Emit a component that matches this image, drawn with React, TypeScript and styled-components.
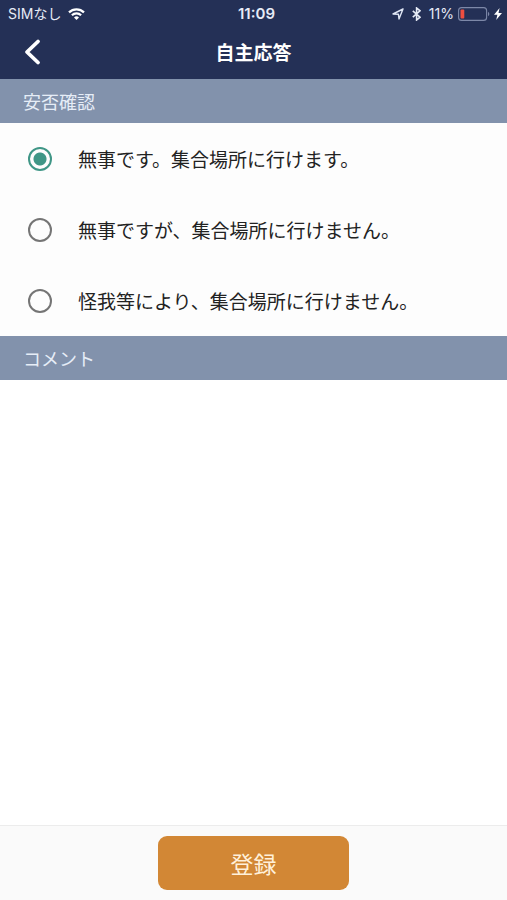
import React, { useState } from "react";
import styled, { createGlobalStyle } from "styled-components";

const GlobalStyle = createGlobalStyle`
  *, *::before, *::after { box-sizing: border-box; }
  body {
    margin: 0;
    background: #ffffff;
    color: #222222;
    font-family: "Noto Sans CJK JP", sans-serif;
  }
`;

const Screen = styled.form`
  display: flex;
  flex-direction: column;
  min-height: 100vh;
`;

const TopArea = styled.header`
  background: #243056;
  color: #ffffff;
`;

const StatusBar = styled.div`
  display: grid;
  grid-template-columns: 1fr auto 1fr;
  align-items: center;
  height: 28px;
  padding: 0 5px 0 8px;
  font-family: Inter, "Noto Sans CJK JP", sans-serif;
  font-size: 14px;
  line-height: 28px;
  color: #e6ebf6;
`;

const StatusGroup = styled.div<{ $end?: boolean }>`
  display: flex;
  align-items: center;
  justify-content: ${(p) => (p.$end ? "flex-end" : "flex-start")};
  gap: ${(p) => (p.$end ? 8 : 7)}px;
`;

const Clock = styled.span`
  padding-left: 3px;
  font-size: 15px;
  font-weight: 600;
`;

const Power = styled.span`
  display: flex;
  align-items: center;
  gap: 4px;
`;

const NavBar = styled.div`
  display: grid;
  grid-template-columns: 48px 1fr 48px;
  align-items: center;
  height: 51px;
  padding: 0 8px 3px;
`;

const BackButton = styled.button`
  display: flex;
  align-items: center;
  justify-content: center;
  height: 48px;
  padding: 0;
  border: 0;
  background: none;
  color: inherit;
  cursor: pointer;
`;

const Title = styled.h1`
  margin: 0;
  text-align: center;
  font-size: 19px;
  line-height: 28px;
  font-weight: 700;
`;

const SectionTitle = styled.h2`
  margin: 0;
  padding: 0 23px;
  background: #8292ac;
  color: #e6edf7;
  font-size: 18px;
  line-height: 44px;
  font-weight: 400;
`;

const Options = styled.div`
  background: #fdfdfd;
`;

const Option = styled.label`
  display: flex;
  align-items: center;
  gap: 26px;
  min-height: 71px;
  padding: 0 28px;
  font-size: 19px;
  line-height: 28px;
  cursor: pointer;
`;

const Radio = styled.input`
  appearance: none;
  flex: none;
  width: 24px;
  height: 24px;
  margin: 0;
  border: 2px solid #757575;
  border-radius: 50%;

  &:checked {
    border-color: #3f9686;
    background: radial-gradient(circle, #3f9686 6px, transparent 7px);
  }
`;

const Comment = styled.textarea`
  flex: 1;
  width: 100%;
  min-height: 120px;
  padding: 16px 23px;
  border: 0;
  outline: none;
  resize: none;
  background: #ffffff;
  color: inherit;
  font: inherit;
  font-size: 18px;
`;

const Footer = styled.footer`
  display: flex;
  justify-content: center;
  padding: 10px 16px;
  border-top: 1px solid #ececec;
  background: #fafafa;
`;

const SubmitButton = styled.button`
  width: 191px;
  height: 54px;
  padding: 0;
  border: 0;
  border-radius: 9px;
  background: #d28735;
  color: #fff0da;
  font: inherit;
  font-size: 23px;
  line-height: 54px;
  cursor: pointer;
`;

const WifiIcon = () => (
  <svg width="17" height="12" viewBox="0 0 17 12" fill="none" stroke="#fff" strokeWidth="2.2" aria-label="Wi-Fi">
    <path d="M1 4.4a10.6 10.6 0 0 1 15 0" />
    <path d="M3.9 7.3a6.5 6.5 0 0 1 9.2 0" />
    <path d="M8.5 12 6 9.5a3.5 3.5 0 0 1 5 0z" fill="#fff" stroke="none" />
  </svg>
);

const LocationIcon = () => (
  <svg width="12" height="12" viewBox="0 0 12 12" fill="none" stroke="#dfe6f4" strokeWidth="1.4" strokeLinejoin="round" aria-label="位置情報">
    <path d="M11 1 1 6l5.4.2.6 4.8z" />
  </svg>
);

const BluetoothIcon = () => (
  <svg width="9" height="14" viewBox="0 0 9 14" fill="none" stroke="#e6ebf6" strokeWidth="1.6" aria-label="Bluetooth">
    <path d="M.8 3.8 8 10.2 4.6 13V1L8 3.8.8 10.2" />
  </svg>
);

const BatteryIcon = () => (
  <svg width="32" height="14" viewBox="0 0 32 14" aria-label="バッテリー">
    <rect x="0.6" y="0.6" width="28" height="12.8" rx="3" fill="none" stroke="#7d88a8" strokeWidth="1.1" />
    <rect x="2.5" y="2.5" width="3.8" height="9" rx="1" fill="#ee4e40" />
    <path d="M30 4.8c1.8.7 1.8 3.7 0 4.4z" fill="#7d88a8" />
  </svg>
);

const BoltIcon = () => (
  <svg width="8" height="12" viewBox="0 0 8 12" fill="#fff" aria-label="充電中">
    <path d="M5.6 0 0 6.8h3.4L2.2 12 8 4.9H4.5z" />
  </svg>
);

const BackIcon = () => (
  <svg width="18" height="28" viewBox="0 0 18 28" fill="none" stroke="currentColor" strokeWidth="3.8" strokeLinecap="round" strokeLinejoin="round">
    <path d="M15 3.5 4 14l11 10.5" />
  </svg>
);

const choices = [
  "無事です。集合場所に行けます。",
  "無事ですが、集合場所に行けません。",
  "怪我等により、集合場所に行けません。",
];

export default function App() {
  const [selected, setSelected] = useState(0);
  const [comment, setComment] = useState("");

  return (
    <Screen lang="ja" onSubmit={(e) => e.preventDefault()}>
      <GlobalStyle />
      <TopArea>
        <StatusBar>
          <StatusGroup>
            <span>SIMなし</span>
            <WifiIcon />
          </StatusGroup>
          <Clock>11:09</Clock>
          <StatusGroup $end>
            <LocationIcon />
            <BluetoothIcon />
            <Power>
              <span>11%</span>
              <BatteryIcon />
              <BoltIcon />
            </Power>
          </StatusGroup>
        </StatusBar>
        <NavBar>
          <BackButton type="button" aria-label="戻る">
            <BackIcon />
          </BackButton>
          <Title>自主応答</Title>
        </NavBar>
      </TopArea>

      <SectionTitle id="safety">安否確認</SectionTitle>
      <Options role="radiogroup" aria-labelledby="safety">
        {choices.map((text, i) => (
          <Option key={text}>
            <Radio type="radio" name="safety" checked={selected === i} onChange={() => setSelected(i)} />
            <span>{text}</span>
          </Option>
        ))}
      </Options>

      <SectionTitle id="comment">コメント</SectionTitle>
      <Comment aria-labelledby="comment" value={comment} onChange={(e) => setComment(e.target.value)} />

      <Footer>
        <SubmitButton type="submit">登録</SubmitButton>
      </Footer>
    </Screen>
  );
}
